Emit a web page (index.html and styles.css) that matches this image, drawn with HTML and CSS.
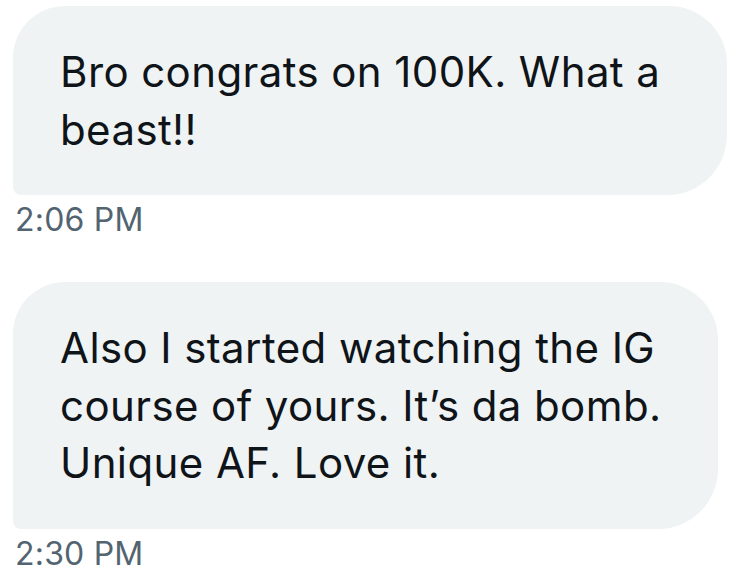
FILE: index.html
```html
<!DOCTYPE html>
<html lang="en">
<head>
<meta charset="utf-8">
<title>Messages</title>
<link rel="stylesheet" href="styles.css">
</head>
<body>
<main class="thread">
  <div class="message">
    <div class="bubble bubble-first">Bro congrats on 100K. What a<br>beast!!</div>
    <div class="time">2:06 PM</div>
  </div>
  <div class="message">
    <div class="bubble bubble-second">Also I started watching the IG<br>course of yours. It’s da bomb.<br>Unique AF. Love it.</div>
    <div class="time">2:30 PM</div>
  </div>
</main>
</body>
</html>
```
FILE: styles.css
```css
html, body {
  margin: 0;
  padding: 0;
  background: #ffffff;
}

.thread {
  display: flex;
  flex-direction: column;
  gap: 42px;
  padding: 6px 0 0 13px;
  font-family: Inter, "Liberation Sans", sans-serif;
}

.message {
  display: flex;
  flex-direction: column;
  align-items: flex-start;
}

.bubble {
  box-sizing: border-box;
  background: #eff3f4;
  color: #0f1419;
  font-size: 42px;
  line-height: 57.5px;
  letter-spacing: 0.4px;
  padding: 37px 20px 37px 47px;
  border-radius: 52px 58px 60px 8px;
  white-space: nowrap;
}

.bubble-first {
  width: 714px;
}

.bubble-second {
  width: 705px;
}

.time {
  margin-top: 5px;
  color: #536471;
  font-size: 32px;
  line-height: 40px;
  letter-spacing: 0.2px;
  padding-left: 2px;
}
```
